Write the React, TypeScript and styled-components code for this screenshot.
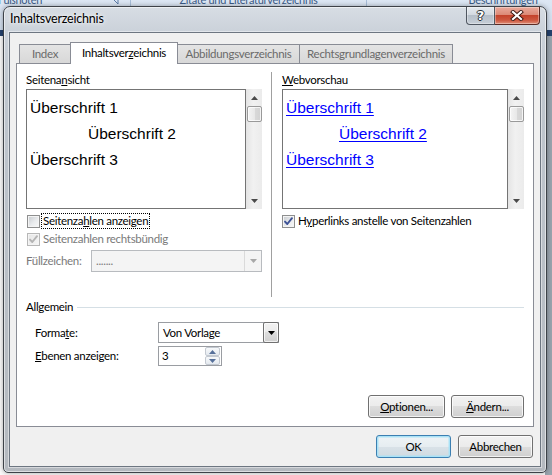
import React from "react";
import styled, { createGlobalStyle } from "styled-components";

const UI = `Lato, "Liberation Sans", "DejaVu Sans", sans-serif`;
const PREVIEW = `"Liberation Sans", Arial, sans-serif`;

const GlobalStyle = createGlobalStyle`
  * { box-sizing: border-box; }
  html, body { margin: 0; padding: 0; }
  body {
    width: 552px;
    height: 475px;
    overflow: hidden;
    font-family: ${UI};
    font-size: 11.5px;
    letter-spacing: -0.3px;
    color: #000;
    background: #ffffff;
  }
`;

/* ---------- background application (Word ribbon behind the dialog) ---------- */

const Desktop = styled.div`
  position: relative;
  width: 552px;
  height: 475px;
  overflow: hidden;
  display: flex;
  flex-direction: column;
  background: #ffffff;
`;

const Ribbon = styled.div`
  height: 30px;
  flex: none;
  display: flex;
  overflow: hidden;
  background: linear-gradient(180deg, #dde7f4 0%, #cfdcec 100%);
`;

const RibbonGroup = styled.div<{ $w: number; $justify?: string }>`
  width: ${(p) => p.$w}px;
  flex: none;
  display: flex;
  justify-content: ${(p) => p.$justify ?? "center"};
  align-items: flex-start;
  border-right: 1px solid #a8bed8;
  padding-right: ${(p) => (p.$justify ? 11 : 0)}px;
`;

const RibbonLabel = styled.div<{ $shift?: number }>`
  font-size: 11px;
  line-height: 13px;
  margin-top: -7px;
  margin-left: ${(p) => p.$shift ?? 0}px;
  color: #3b5b87;
  white-space: nowrap;
`;

const Launcher = styled.svg`
  margin-top: -3px;
  flex: none;
`;

const RulerStrip = styled.div`
  height: 6px;
  flex: none;
  background: #23416d;
`;

const Workspace = styled.div`
  flex: 1;
  background: linear-gradient(90deg, #fbfbfb 0px, #fbfbfb 545px, #9aa4ae 545px);
`;

/* ---------- the dialog window ---------- */

const Window = styled.div`
  position: absolute;
  left: 3px;
  top: 6px;
  width: 544px;
  height: 467px;
  border: 1px solid #3d4248;
  border-radius: 7px 7px 5px 5px;
  background: linear-gradient(
    180deg,
    #d7dde4 0px,
    #cbd2da 24px,
    #bfc6ce 80px,
    #b4b9bf 100%
  );
  box-shadow: inset 0 0 0 1px rgba(255, 255, 255, 0.55),
    0 0 5px rgba(0, 0, 0, 0.35);
  display: flex;
  flex-direction: column;
  padding: 0 5px 5px 5px;
`;

const TitleBar = styled.div`
  height: 25px;
  flex: none;
  padding: 5px 0 0 1px;
`;

const TitleText = styled.div`
  font-size: 12.5px;
  letter-spacing: -0.2px;
  line-height: 14px;
  color: #000;
  text-shadow: 0 0 6px rgba(255, 255, 255, 0.95), 0 0 3px rgba(255, 255, 255, 0.8);
`;

const CaptionButtons = styled.div`
  position: absolute;
  top: 0;
  right: 6px;
  display: flex;
  height: 18px;
`;

const CaptionButton = styled.div<{ $kind: "help" | "close" }>`
  width: ${(p) => (p.$kind === "help" ? 29 : 45)}px;
  height: 18px;
  display: flex;
  align-items: center;
  justify-content: center;
  border: 1px solid ${(p) => (p.$kind === "help" ? "#4f5660" : "#5b2a24")};
  border-top: none;
  border-left-width: ${(p) => (p.$kind === "help" ? 1 : 0)}px;
  border-radius: ${(p) => (p.$kind === "help" ? "0 0 0 4px" : "0 0 4px 0")};
  background: ${(p) =>
    p.$kind === "help"
      ? "linear-gradient(180deg, #e6ebf0 0%, #d3d9e0 45%, #b6bfc9 50%, #c6ced7 100%)"
      : "linear-gradient(180deg, #eaaa9c 0%, #dc8a77 45%, #c4432c 50%, #cd5840 78%, #e08f78 100%)"};
  box-shadow: inset 0 0 0 1px rgba(255, 255, 255, 0.35);
  color: #fff;
  font-family: "DejaVu Sans", sans-serif;
  font-weight: bold;
  font-size: 13px;
  letter-spacing: 0;
  line-height: 14px;
  text-shadow: 0 0 1px #2c3136, 1px 0 0 #2c3136, -1px 0 0 #2c3136, 0 1px 0 #2c3136,
    0 -1px 0 #2c3136;
`;

const Client = styled.div`
  flex: 1;
  background: #f0f0f0;
  border: 1px solid #6d7681;
  box-shadow: 0 0 0 1px rgba(255, 255, 255, 0.45);
  padding: 9px 6px 8px 6px;
  display: flex;
  flex-direction: column;
`;

/* ---------- tabs ---------- */

const TabStrip = styled.div`
  height: 22px;
  flex: none;
  margin-bottom: -1px;
  padding-left: 3px;
  display: flex;
  align-items: flex-end;
  position: relative;
  z-index: 1;
`;

const Tab = styled.div<{ $active?: boolean; $w: number }>`
  width: ${(p) => p.$w}px;
  flex: none;
  height: ${(p) => (p.$active ? 22 : 19)}px;
  margin-left: -1px;
  margin-bottom: ${(p) => (p.$active ? 0 : 1)}px;
  border: 1px solid #898c95;
  border-bottom: none;
  background: ${(p) =>
    p.$active ? "#ffffff" : "linear-gradient(180deg, #e4e4e4 0%, #d8d8d8 100%)"};
  color: ${(p) => (p.$active ? "#000" : "#6a6a6a")};
  position: relative;
  z-index: ${(p) => (p.$active ? 2 : 1)};
  display: flex;
  align-items: center;
  justify-content: center;
  padding-bottom: ${(p) => (p.$active ? 2 : 0)}px;
  line-height: 14px;
  white-space: nowrap;
  &:first-child {
    margin-left: 0;
  }
`;

const Panel = styled.div`
  height: 364px;
  flex: none;
  background: #ffffff;
  border: 1px solid #898c95;
  padding: 8px 9px 8px 9px;
  display: flex;
  flex-direction: column;
`;

const Columns = styled.div`
  height: 225px;
  flex: none;
  display: grid;
  grid-template-columns: 236px 20px 242px;
`;

const Column = styled.div`
  display: flex;
  flex-direction: column;
  padding-top: 1px;
`;

const VSeparator = styled.div`
  width: 1px;
  margin-left: 9px;
  background: #a0a0a0;
`;

const SectionLabel = styled.div`
  height: 14px;
  line-height: 14px;
  white-space: nowrap;
`;

const Key = styled.span`
  text-decoration: underline;
  text-underline-offset: 1px;
`;

/* ---------- preview boxes ---------- */

const PreviewRow = styled.div`
  height: 120px;
  flex: none;
  margin-top: 2px;
  display: flex;
`;

const PreviewBox = styled.div`
  flex: 1;
  border: 1px solid #747474;
  background: #ffffff;
  padding: 5px 0 0 3px;
  font-family: ${PREVIEW};
  font-size: 15.5px;
  letter-spacing: 0;
  overflow: hidden;
`;

const PreviewLine = styled.div<{ $indent?: number }>`
  line-height: 26px;
  height: 26px;
  padding-left: ${(p) => p.$indent ?? 0}px;
  white-space: nowrap;
`;

const PreviewLink = styled.span`
  color: #0000ff;
  text-decoration: underline;
  text-underline-offset: 2px;
`;

const ScrollBar = styled.div`
  width: 16px;
  flex: none;
  display: flex;
  flex-direction: column;
  align-items: center;
  background: linear-gradient(90deg, #e4e4e4 0%, #f1f1f1 45%, #ebebeb 100%);
`;

const ScrollArrow = styled.div`
  height: 17px;
  width: 16px;
  flex: none;
  display: flex;
  align-items: center;
  justify-content: center;
`;

const ScrollThumb = styled.div`
  width: 15px;
  height: 16px;
  flex: none;
  border: 1px solid #999999;
  border-radius: 2px;
  background: linear-gradient(90deg, #f4f4f4 0%, #e8e8e8 50%, #d9d9d9 51%, #d2d2d2 100%);
  box-shadow: inset 0 0 0 1px rgba(255, 255, 255, 0.75);
`;

const ScrollTrack = styled.div`
  flex: 1;
`;

/* ---------- check boxes ---------- */

const CheckRow = styled.div<{ $mt: number }>`
  height: 16px;
  flex: none;
  margin-top: ${(p) => p.$mt}px;
  display: flex;
  align-items: center;
`;

const CheckBox = styled.span<{ $disabled?: boolean; $offset?: number }>`
  width: 13px;
  height: 13px;
  flex: none;
  margin-left: ${(p) => p.$offset ?? 0}px;
  border: 1px solid ${(p) => (p.$disabled ? "#b7b7b7" : "#8e8f8f")};
  background: ${(p) =>
    p.$disabled
      ? "linear-gradient(135deg, #e6e6e6 0%, #f6f6f6 100%)"
      : "linear-gradient(135deg, #c6cace 0%, #e9ebed 55%, #f8f8f8 100%)"};
  box-shadow: inset 0 0 0 1px #f4f4f4;
  display: flex;
  align-items: center;
  justify-content: center;
`;

const CheckLabel = styled.span<{ $focus?: boolean; $disabled?: boolean }>`
  margin-left: 1px;
  height: 16px;
  line-height: 14px;
  padding: 0 1px;
  border: 1px ${(p) => (p.$focus ? "dotted #000" : "solid transparent")};
  color: ${(p) => (p.$disabled ? "#7a7a7a" : "#000")};
  white-space: nowrap;
`;

/* ---------- fields ---------- */

const FieldRow = styled.div<{ $mt: number; $h: number; $indent?: number }>`
  height: ${(p) => p.$h}px;
  flex: none;
  margin-top: ${(p) => p.$mt}px;
  padding-left: ${(p) => p.$indent ?? 0}px;
  display: flex;
  align-items: center;
`;

const FieldLabel = styled.span<{ $w: number; $disabled?: boolean }>`
  width: ${(p) => p.$w}px;
  flex: none;
  line-height: 14px;
  color: ${(p) => (p.$disabled ? "#7a7a7a" : "#000")};
  white-space: nowrap;
`;

const Combo = styled.div<{ $w: number; $disabled?: boolean }>`
  width: ${(p) => p.$w}px;
  height: 100%;
  flex: none;
  display: flex;
  border: 1px solid ${(p) => (p.$disabled ? "#b8bbbf" : "#9a9da2")};
  background: ${(p) => (p.$disabled ? "#f4f4f4" : "#ffffff")};
`;

const ComboText = styled.div<{ $disabled?: boolean }>`
  flex: 1;
  padding-left: 4px;
  display: flex;
  align-items: center;
  line-height: 14px;
  color: ${(p) => (p.$disabled ? "#7a7a7a" : "#000")};
  white-space: nowrap;
`;

const ComboButton = styled.div<{ $disabled?: boolean }>`
  width: ${(p) => (p.$disabled ? 17 : 16)}px;
  flex: none;
  display: flex;
  align-items: center;
  justify-content: center;
  ${(p) =>
    p.$disabled
      ? `border-left: 1px solid #dadada; background: #f4f4f4;`
      : `margin: -1px -1px -1px 0;
         border: 1px solid #707070;
         border-radius: 2px;
         background: linear-gradient(180deg, #f2f2f2 0%, #ebebeb 50%, #dddddd 50%, #cfcfcf 100%);
         box-shadow: inset 0 0 0 1px rgba(255,255,255,0.7);`}
`;

const Spin = styled.div<{ $w: number }>`
  width: ${(p) => p.$w}px;
  height: 100%;
  flex: none;
  display: flex;
  border: 1px solid #9a9da2;
  background: #ffffff;
`;

const SpinText = styled.div`
  flex: 1;
  padding-left: 3px;
  display: flex;
  align-items: center;
  line-height: 14px;
`;

const SpinButtons = styled.div`
  width: 15px;
  flex: none;
  display: flex;
  flex-direction: column;
  margin: 0 1px 0 0;
`;

const SpinButton = styled.div`
  flex: 1;
  display: flex;
  align-items: center;
  justify-content: center;
  border: 1px solid #c3c9d1;
  border-radius: 2px;
  background: linear-gradient(180deg, #f7f9fb 0%, #e4e9ef 100%);
`;

const GroupHeader = styled.div`
  height: 14px;
  flex: none;
  margin-top: 3px;
  display: flex;
  align-items: center;
  line-height: 14px;
`;

const GroupLine = styled.div`
  flex: 1;
  height: 1px;
  margin-left: 4px;
  background: #d5dfe5;
`;

const Spacer = styled.div`
  flex: 1;
`;

const ButtonRow = styled.div<{ $gap: number; $mt?: number; $pr?: number }>`
  display: flex;
  justify-content: flex-end;
  gap: ${(p) => p.$gap}px;
  margin-top: ${(p) => p.$mt ?? 0}px;
  padding-right: ${(p) => p.$pr ?? 0}px;
  flex: none;
`;

const Button = styled.div<{ $w: number; $default?: boolean }>`
  width: ${(p) => p.$w}px;
  height: 23px;
  flex: none;
  display: flex;
  align-items: center;
  justify-content: center;
  line-height: 14px;
  border: 1px solid ${(p) => (p.$default ? "#3c7fb1" : "#707070")};
  border-radius: 3px;
  background: ${(p) =>
    p.$default
      ? "linear-gradient(180deg, #eef3f6 0%, #e6edf1 50%, #d9e2e8 50%, #d0dae1 100%)"
      : "linear-gradient(180deg, #f2f2f2 0%, #ebebeb 50%, #dddddd 50%, #cfcfcf 100%)"};
  box-shadow: ${(p) =>
    p.$default
      ? "inset 0 0 0 1px #a9e2f7, inset 0 0 0 2px rgba(169,226,247,0.45)"
      : "inset 0 0 0 1px rgba(255,255,255,0.75)"};
  white-space: nowrap;
`;

/* ---------- small drawings ---------- */

const Triangle = ({ dir, color, w = 7, h = 4 }: { dir: "up" | "down"; color: string; w?: number; h?: number }) => (
  <svg width={w} height={h} viewBox={`0 0 ${w} ${h}`}>
    <path
      d={dir === "up" ? `M0 ${h} L${w / 2} 0 L${w} ${h} Z` : `M0 0 L${w} 0 L${w / 2} ${h} Z`}
      fill={color}
    />
  </svg>
);

const Check = ({ color }: { color: string }) => (
  <svg width="11" height="11" viewBox="0 0 11 11">
    <path d="M2 5.6 L4.3 8 L9 2.2" fill="none" stroke={color} strokeWidth="1.9" strokeLinecap="round" strokeLinejoin="round" />
  </svg>
);

const CloseGlyph = () => (
  <svg width="14" height="11" viewBox="0 0 14 11">
    <path d="M3 2 L11 9 M11 2 L3 9" stroke="#3a1611" strokeWidth="4" strokeLinecap="square" />
    <path d="M3 2 L11 9 M11 2 L3 9" stroke="#ffffff" strokeWidth="2.2" strokeLinecap="square" />
  </svg>
);

const Scroller = () => (
  <ScrollBar>
    <ScrollArrow>
      <Triangle dir="up" color="#4a4a4a" w={7} h={4} />
    </ScrollArrow>
    <ScrollThumb />
    <ScrollTrack />
    <ScrollArrow>
      <Triangle dir="down" color="#4a4a4a" w={7} h={4} />
    </ScrollArrow>
  </ScrollBar>
);

export default function App() {
  return (
    <>
      <GlobalStyle />
      <Desktop>
        <Ribbon>
          <RibbonGroup $w={131} $justify="space-between">
            <RibbonLabel $shift={-2}>Fußnoten</RibbonLabel>
            <Launcher width="8" height="8" viewBox="0 0 8 8">
              <path d="M1 1 H7 V7 M2 2 L7 7" stroke="#5a7aa6" strokeWidth="1" fill="none" />
            </Launcher>
          </RibbonGroup>
          <RibbonGroup $w={236}>
            <RibbonLabel>Zitate und Literaturverzeichnis</RibbonLabel>
          </RibbonGroup>
          <RibbonGroup $w={273}>
            <RibbonLabel>Beschriftungen</RibbonLabel>
          </RibbonGroup>
        </Ribbon>
        <RulerStrip />
        <Workspace />

        <Window>
          <TitleBar>
            <TitleText>Inhaltsverzeichnis</TitleText>
          </TitleBar>
          <CaptionButtons>
            <CaptionButton $kind="help">?</CaptionButton>
            <CaptionButton $kind="close">
              <CloseGlyph />
            </CaptionButton>
          </CaptionButtons>

          <Client>
            <TabStrip>
              <Tab $w={52}>Index</Tab>
              <Tab $w={108} $active>
                <span>
                  Inhaltsver<Key>z</Key>eichnis
                </span>
              </Tab>
              <Tab $w={123}>Abbildungsverzeichnis</Tab>
              <Tab $w={154}>Rechtsgrundlagenverzeichnis</Tab>
            </TabStrip>

            <Panel>
              <Columns>
                <Column>
                  <SectionLabel>
                    Seitena<Key>n</Key>sicht
                  </SectionLabel>
                  <PreviewRow>
                    <PreviewBox>
                      <PreviewLine>Überschrift 1</PreviewLine>
                      <PreviewLine $indent={58}>Überschrift 2</PreviewLine>
                      <PreviewLine>Überschrift 3</PreviewLine>
                    </PreviewBox>
                    <Scroller />
                  </PreviewRow>
                  <CheckRow $mt={4}>
                    <CheckBox $offset={1} />
                    <CheckLabel $focus>
                      Seitenza<Key>h</Key>len anzeigen
                    </CheckLabel>
                  </CheckRow>
                  <CheckRow $mt={2}>
                    <CheckBox $offset={1} $disabled>
                      <Check color="#b4b4b4" />
                    </CheckBox>
                    <CheckLabel $disabled>Seitenzahlen rechtsbündig</CheckLabel>
                  </CheckRow>
                  <FieldRow $mt={3} $h={22}>
                    <FieldLabel $w={65} $disabled>
                      Füllzeichen:
                    </FieldLabel>
                    <Combo $w={171} $disabled>
                      <ComboText $disabled>.......</ComboText>
                      <ComboButton $disabled>
                        <Triangle dir="down" color="#a8a8a8" w={7} h={4} />
                      </ComboButton>
                    </Combo>
                  </FieldRow>
                </Column>

                <VSeparator />

                <Column>
                  <SectionLabel>
                    <Key>W</Key>ebvorschau
                  </SectionLabel>
                  <PreviewRow>
                    <PreviewBox>
                      <PreviewLine>
                        <PreviewLink>Überschrift 1</PreviewLink>
                      </PreviewLine>
                      <PreviewLine $indent={53}>
                        <PreviewLink>Überschrift 2</PreviewLink>
                      </PreviewLine>
                      <PreviewLine>
                        <PreviewLink>Überschrift 3</PreviewLink>
                      </PreviewLine>
                    </PreviewBox>
                    <Scroller />
                  </PreviewRow>
                  <CheckRow $mt={4}>
                    <CheckBox>
                      <Check color="#3d5296" />
                    </CheckBox>
                    <CheckLabel>
                      H<Key>y</Key>perlinks anstelle von Seitenzahlen
                    </CheckLabel>
                  </CheckRow>
                </Column>
              </Columns>

              <GroupHeader>
                <span>Allgemein</span>
                <GroupLine />
              </GroupHeader>

              <FieldRow $mt={8} $h={21} $indent={9}>
                <FieldLabel $w={123}>
                  Forma<Key>t</Key>e:
                </FieldLabel>
                <Combo $w={121}>
                  <ComboText>Von Vorlage</ComboText>
                  <ComboButton>
                    <Triangle dir="down" color="#000000" w={7} h={4} />
                  </ComboButton>
                </Combo>
              </FieldRow>

              <FieldRow $mt={3} $h={20} $indent={9}>
                <FieldLabel $w={123}>
                  <Key>E</Key>benen anzeigen:
                </FieldLabel>
                <Spin $w={64}>
                  <SpinText>3</SpinText>
                  <SpinButtons>
                    <SpinButton>
                      <Triangle dir="up" color="#56709a" w={7} h={4} />
                    </SpinButton>
                    <SpinButton>
                      <Triangle dir="down" color="#56709a" w={7} h={4} />
                    </SpinButton>
                  </SpinButtons>
                </Spin>
              </FieldRow>

              <Spacer />

              <ButtonRow $gap={6}>
                <Button $w={77}>
                  <span>
                    <Key>O</Key>ptionen...
                  </span>
                </Button>
                <Button $w={73}>
                  <span>
                    <Key>Ä</Key>ndern...
                  </span>
                </Button>
              </ButtonRow>
            </Panel>

            <ButtonRow $gap={7} $mt={8} $pr={1}>
              <Button $w={75} $default>
                OK
              </Button>
              <Button $w={75}>Abbrechen</Button>
            </ButtonRow>
          </Client>
        </Window>
      </Desktop>
    </>
  );
}
